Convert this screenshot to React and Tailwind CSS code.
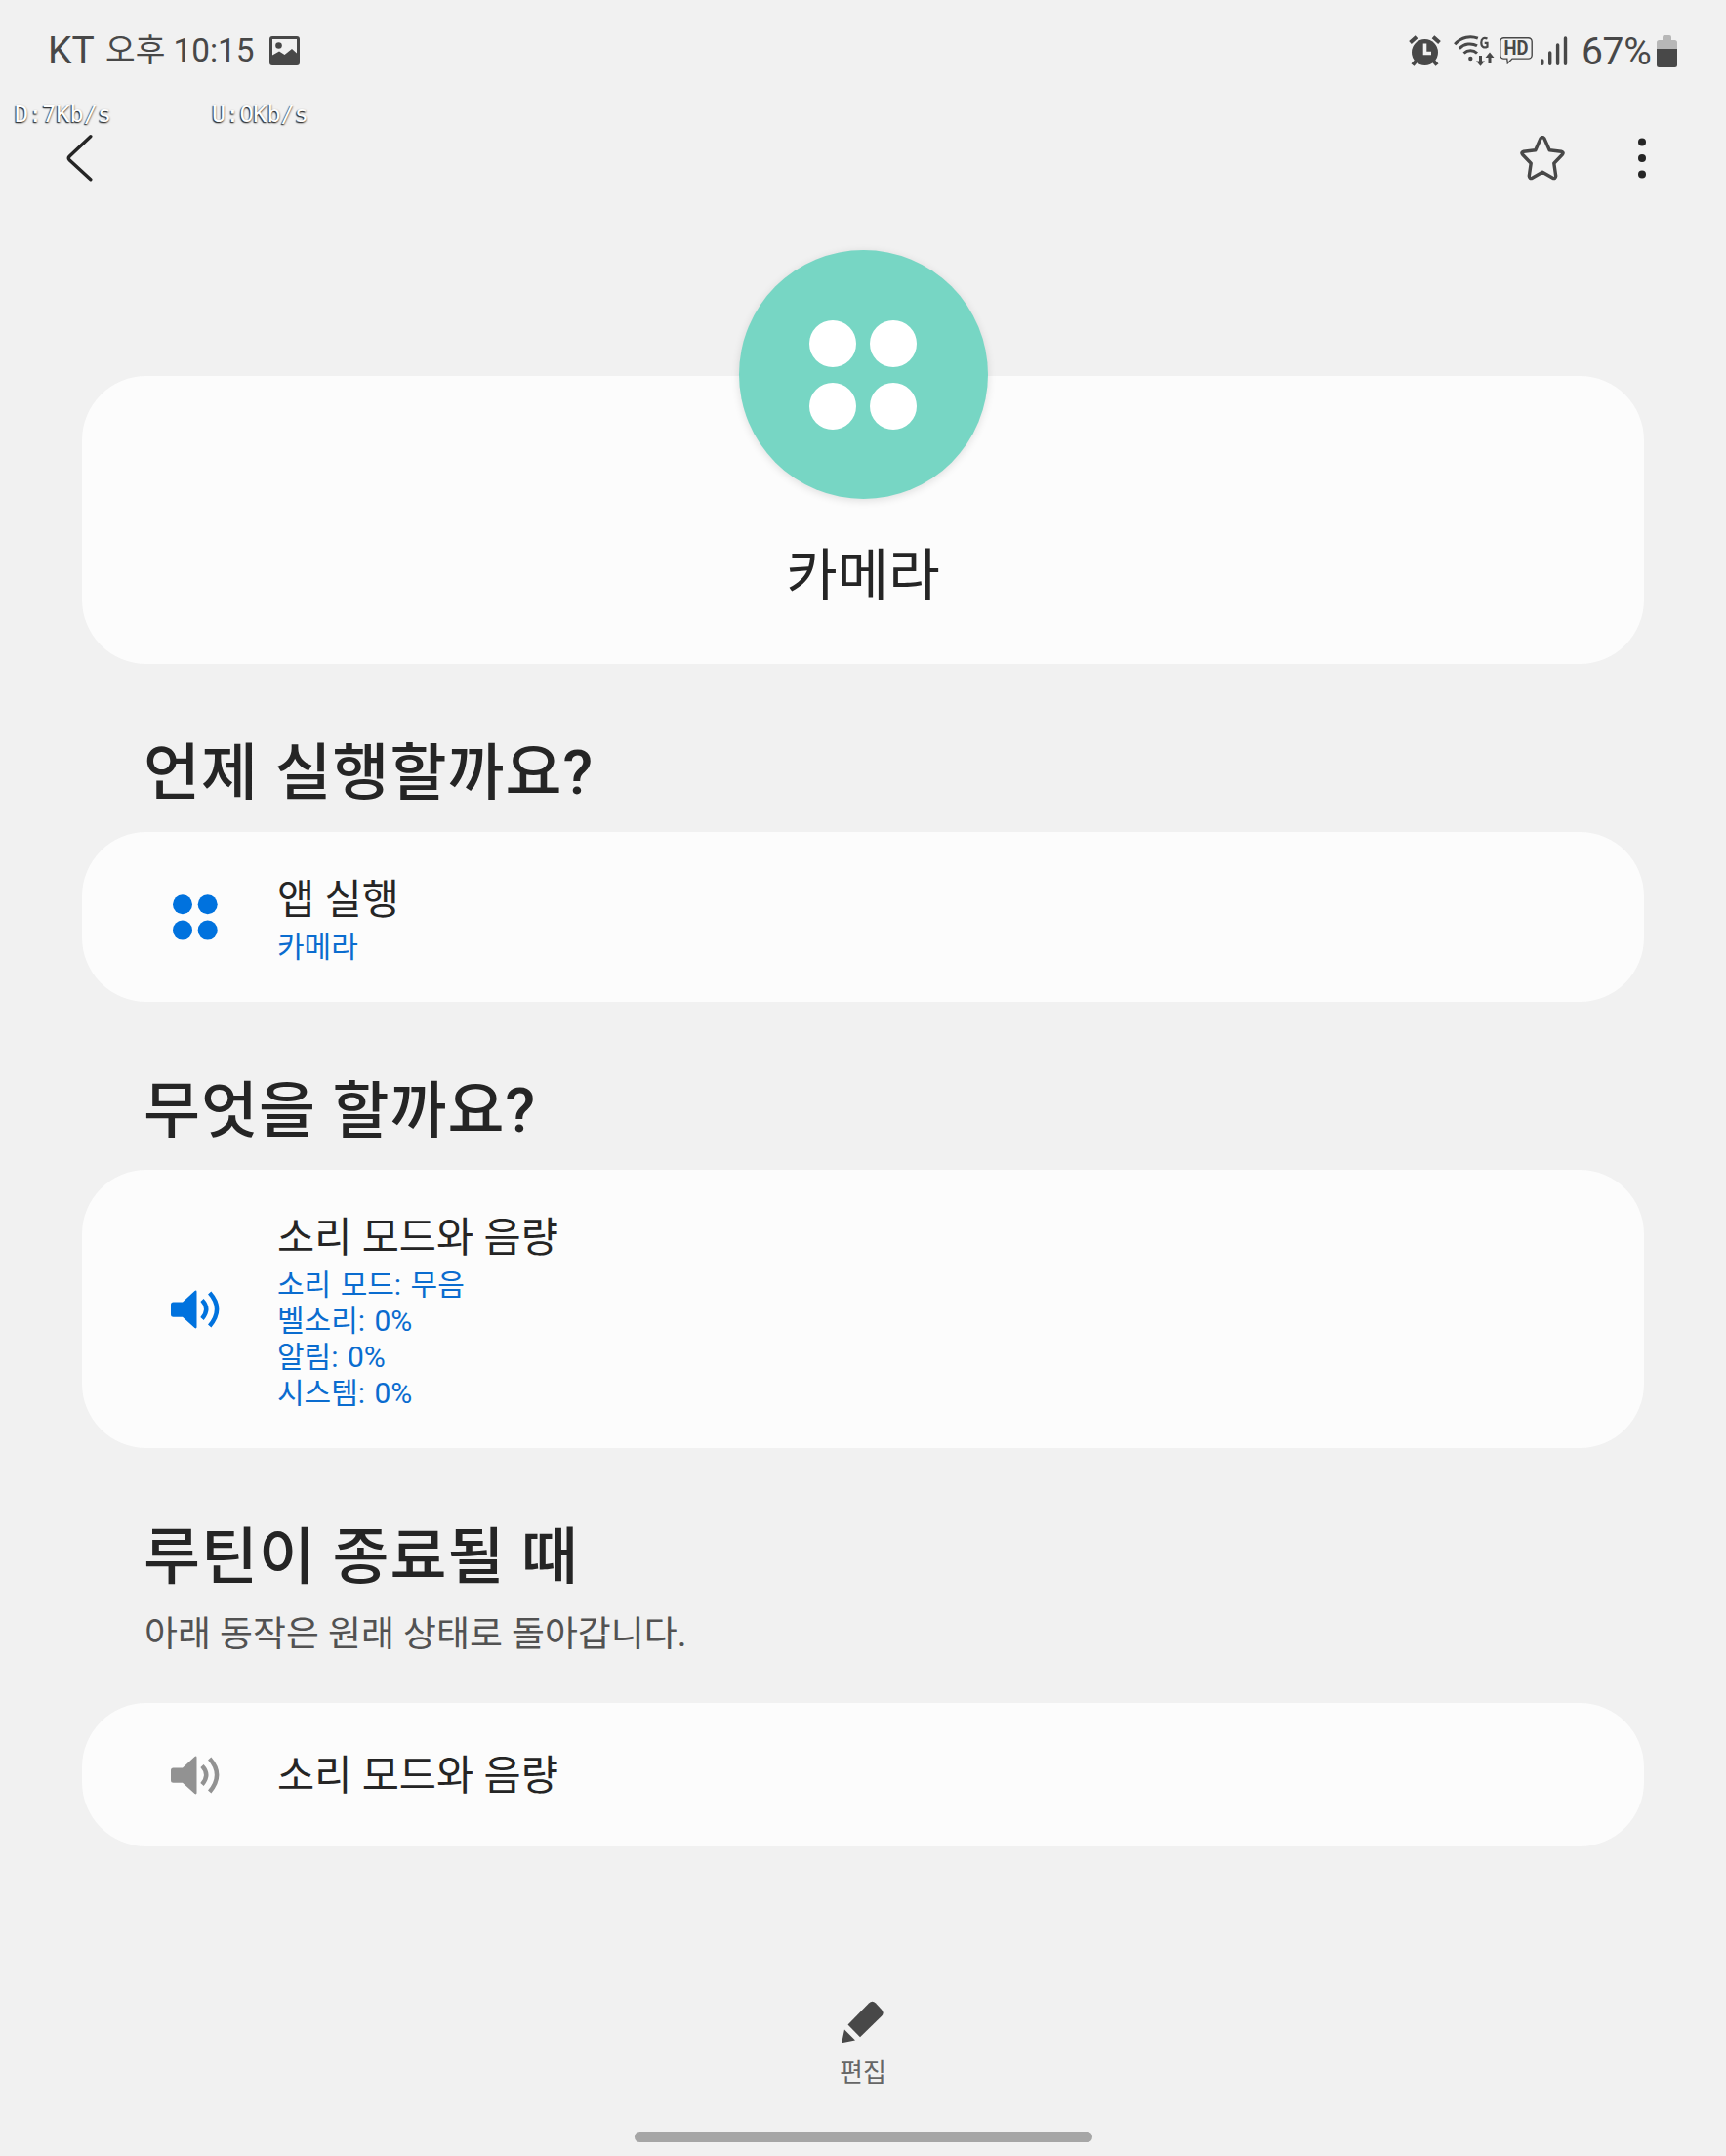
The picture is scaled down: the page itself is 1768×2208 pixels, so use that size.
const IconPicture = () => (
    <svg width="31" height="30" viewBox="0 0 31 30" fill="#484848">
        <path
            fillRule="evenodd"
            d="M3 0h25a3 3 0 0 1 3 3v24a3 3 0 0 1-3 3H3a3 3 0 0 1-3-3V3a3 3 0 0 1 3-3Zm0 3v16.500l7-4 5.500 3.500 7.500-6 5 4.500V3H3Z"
        />
        <circle cx="9.500" cy="9.500" r="3.300" />
    </svg>
);

const IconAlarm = () => (
    <svg width="34" height="32" viewBox="0 0 34 32" fill="none" stroke="#484848">
        <circle cx="16.500" cy="17.500" r="13.500" fill="#484848" stroke="none" />
        <path d="M1.500 7.500 8 1.800M31.500 7.500 25 1.800" strokeWidth="4" />
        <path d="M7.500 26.500 4 30.500M25.500 26.500 29 30.500" strokeWidth="4" />
        <path d="M16.500 8.500v10h6.500" stroke="#f1f1f1" strokeWidth="3.600" />
    </svg>
);

const IconWifi = () => (
    <svg width="42" height="33" viewBox="0 0 42 33" fill="none" stroke="#484848">
        <path d="M1.200 9.300C8 1.500 17.500.200 24.800 3.200" strokeWidth="3" />
        <path d="M5.800 13.700C10.800 8.300 18.500 7.800 24 10.800" strokeWidth="3" />
        <path d="M10.500 18.500C14.500 14.800 20 14.800 24 18.500" strokeWidth="3" />
        <circle cx="17.300" cy="24" r="2.200" fill="#484848" stroke="none" />
        <path d="M34.500 3.500C31 2 28.300 3.200 28.300 7.500c0 4.800 3 5.800 6.200 4.200V7.800h-2.800" strokeWidth="2.200" />
        <path d="M27.500 21v8M37 29V20" strokeWidth="3" />
        <path d="M23 26.500h9l-4.500 5.200ZM32.500 23h9L37 17.500Z" fill="#484848" stroke="none" />
    </svg>
);

const IconHd = () => (
    <svg width="34" height="28" viewBox="0 0 34 28" fill="none" stroke="#484848">
        <path
            d="M4.500.700h25a3.700 3.700 0 0 1 3.700 3.700v14a3.700 3.700 0 0 1-3.700 3.700H13L8.300 26.800 7.800 22.100H4.500A3.700 3.700 0 0 1 .800 18.400v-14A3.700 3.700 0 0 1 4.500.700Z"
            strokeWidth="1.400"
        />
        <text
            x="17"
            y="18.400"
            textAnchor="middle"
            textLength="25"
            lengthAdjust="spacingAndGlyphs"
            fill="#484848"
            stroke="none"
            className="font-['Roboto',sans-serif] text-[20px] font-bold"
        >
            HD
        </text>
    </svg>
);

const IconSignal = () => (
    <svg width="28" height="30" viewBox="0 0 28 30" stroke="#484848" strokeWidth="3.400" strokeLinecap="round">
        <path d="M1.800 25v3.200M9.700 17v11.200M17.600 9v19.200M25.500 2v26.200" />
    </svg>
);

const IconBattery = () => (
    <svg width="21" height="33" viewBox="0 0 21 33">
        <path d="M6 5V2a2 2 0 0 1 2-2h5a2 2 0 0 1 2 2v3h3.500A2.500 2.500 0 0 1 21 7.500V14H0V7.500A2.500 2.500 0 0 1 2.500 5Z" fill="#b7b7b7" />
        <path d="M0 14h21v16.500a2.500 2.500 0 0 1-2.500 2.500h-16A2.500 2.500 0 0 1 0 30.500Z" fill="#484848" />
    </svg>
);

const IconBack = () => (
    <svg width="28" height="50" viewBox="0 0 28 50" fill="none" stroke="#252525" strokeWidth="3.400" strokeLinecap="round" strokeLinejoin="round">
        <path d="M24.800 2.700 3.300 23q-2 2 0 4L24.800 46.800" />
    </svg>
);

const IconStar = () => (
    <svg width="46" height="46" viewBox="0 0 46 46" fill="none" stroke="#484848" strokeWidth="3.400" strokeLinejoin="round">
        <path d="M21.100 2.800Q23 .200 24.900 2.800L30.200 14.700 42.300 16.200Q45.200 17 43.400 19.300L34.800 28.200 36.700 41.200Q36.400 44.400 33.500 43.300L23 37.200 12.500 43.300Q9.600 44.400 9.300 41.200L11.200 28.200 2.600 19.300Q.800 17 3.700 16.200L15.800 14.700Z" />
    </svg>
);

const IconMore = () => (
    <svg width="10" height="42" viewBox="0 0 10 42" fill="#252525">
        <circle cx="5" cy="4.500" r="4" />
        <circle cx="5" cy="21" r="4" />
        <circle cx="5" cy="37.500" r="4" />
    </svg>
);

const IconApps = () => (
    <svg width="46" height="47" viewBox="0 0 46 47" fill="#0072de" className="ml-0.5">
        <circle cx="10" cy="10.300" r="10" />
        <circle cx="35.700" cy="10.300" r="10" />
        <circle cx="10" cy="36.600" r="10" />
        <circle cx="35.700" cy="36.600" r="10" />
    </svg>
);

const IconSound = ({ color }) => (
    <svg width="50" height="40" viewBox="0 0 50 40" fill="none" stroke={color} strokeWidth="4.400">
        <path d="M2.500 12.500H12L24.500 1Q26.500-.200 26.500 2v36q0 2.200-2 1L12 27.700H2.500Q0 27.700 0 25.200V15Q0 12.500 2.500 12.500Z" fill={color} stroke="none" />
        <path d="M32 10.500Q40.500 19.500 32 29.500" />
        <path d="M39.700 3Q54.500 19.500 39.700 37" />
    </svg>
);

const IconPencil = () => (
    <svg width="44" height="44" viewBox="0 0 44 44" fill="#484848">
        <path d="M6.500 24.500 28 2.500Q31.500-1 35 2.500L41 9Q44.200 12.500 41 15.700L19 37.300Z" />
        <path d="M3 29.500 14 40.500 1.500 43Q.300 43.200.400 42Z" />
    </svg>
);

const Section = ({ title, caption, children }) => (
    <section>
        <h2 className="pt-[72px] pl-[63px] text-[63px] leading-[80px] font-medium tracking-[1px] whitespace-nowrap">{title}</h2>
        {caption ? (
            <p className="pt-[9px] pb-10 pl-16 text-[36.900px] leading-[60px] text-[#525252]">{caption}</p>
        ) : (
            <div className="h-5" />
        )}
        {children}
    </section>
);

const Item = ({ icon, title, values = [] }) => (
    <div className="flex min-h-[147px] items-center rounded-[66px] bg-[#fcfcfc] pt-[42px] pb-[38px] pl-[91px]">
        <div className="mb-1 w-[109px] shrink-0">{icon}</div>
        <div>
            <div className="pb-0.5 text-[41.500px] leading-[55px]">{title}</div>
            {values.map((value) => (
                <div key={value} className="text-[30px] leading-[37px] text-[#0a6ccf] [word-spacing:2px]">
                    {value}
                </div>
            ))}
        </div>
    </div>
);

export default function App() {
    return (
        <div className="relative flex h-[2208px] w-[1768px] flex-col overflow-hidden bg-[#f1f1f1] font-['Roboto','Noto_Sans_CJK_KR',sans-serif] text-[#252525]">
            <div className="flex h-[104px] items-center justify-between pr-[50px] pl-[49px] text-[#484848]">
                <div className="flex items-center">
                    <span className="w-[59px] pt-px text-[39px] leading-none">KT</span>
                    <span className="w-[168px] text-[33.300px] leading-none whitespace-nowrap">오후 10:15</span>
                    <IconPicture />
                </div>
                <div className="flex items-center">
                    <IconAlarm />
                    <span className="w-[12px]" />
                    <IconWifi />
                    <span className="w-[5px]" />
                    <IconHd />
                    <span className="w-[8px]" />
                    <IconSignal />
                    <span className="w-[91px] pt-0.5 pl-[14px] text-[39px] leading-none tracking-[-0.3px]">67%</span>
                    <IconBattery />
                </div>
            </div>

            {/* network speed overlay */}
            <div className="absolute top-[103px] left-[15px] flex gap-[103px] font-['DejaVu_Sans_Mono',monospace] text-[23.500px] leading-[28px] text-white [text-shadow:-1px_1px_1px_#333,0_1px_2px_#444]">
                <span>D:7Kb/s</span>
                <span>
                    U:<span className="-mr-px font-['DejaVu_Sans',sans-serif]">0</span>Kb/s
                </span>
            </div>

            <div className="flex h-[116px] items-center justify-between pr-[81px] pl-[68px]">
                <IconBack />
                <div className="flex items-center gap-[74px]">
                    <IconStar />
                    <IconMore />
                </div>
            </div>

            <main className="flex flex-col px-[84px] pt-[165px]">
                <div className="flex h-[295px] flex-col items-center rounded-[66px] bg-[#fcfcfc]">
                    <div className="-mt-[129px] flex h-[255px] w-[255px] shrink-0 items-center justify-center rounded-full bg-[#77d6c4] shadow-[0_2px_8px_rgba(0,0,0,0.12)]">
                        <div className="grid grid-cols-2 gap-x-[14px] gap-y-[16px]">
                            <span className="h-12 w-12 rounded-full bg-white" />
                            <span className="h-12 w-12 rounded-full bg-white" />
                            <span className="h-12 w-12 rounded-full bg-white" />
                            <span className="h-12 w-12 rounded-full bg-white" />
                        </div>
                    </div>
                    <h1 className="mt-[43px] text-[57px] leading-[72px]">카메라</h1>
                </div>

                <Section title="언제 실행할까요?">
                    <Item icon={<IconApps />} title="앱 실행" values={['카메라']} />
                </Section>
                <Section title="무엇을 할까요?">
                    <Item
                        icon={<IconSound color="#0072de" />}
                        title="소리 모드와 음량"
                        values={['소리 모드: 무음', '벨소리: 0%', '알림: 0%', '시스템: 0%']}
                    />
                </Section>
                <Section title="루틴이 종료될 때" caption="아래 동작은 원래 상태로 돌아갑니다.">
                    <Item icon={<IconSound color="#929292" />} title="소리 모드와 음량" />
                </Section>
            </main>

            <footer className="mt-auto flex flex-col items-center">
                <IconPencil />
                <span className="mt-[11px] text-[26px] leading-[38px] text-[#666]">편집</span>
                <div className="mt-[41px] mb-[14px] h-[11px] w-[469px] rounded-full bg-[#a6a6a6]" />
            </footer>
        </div>
    );
}
